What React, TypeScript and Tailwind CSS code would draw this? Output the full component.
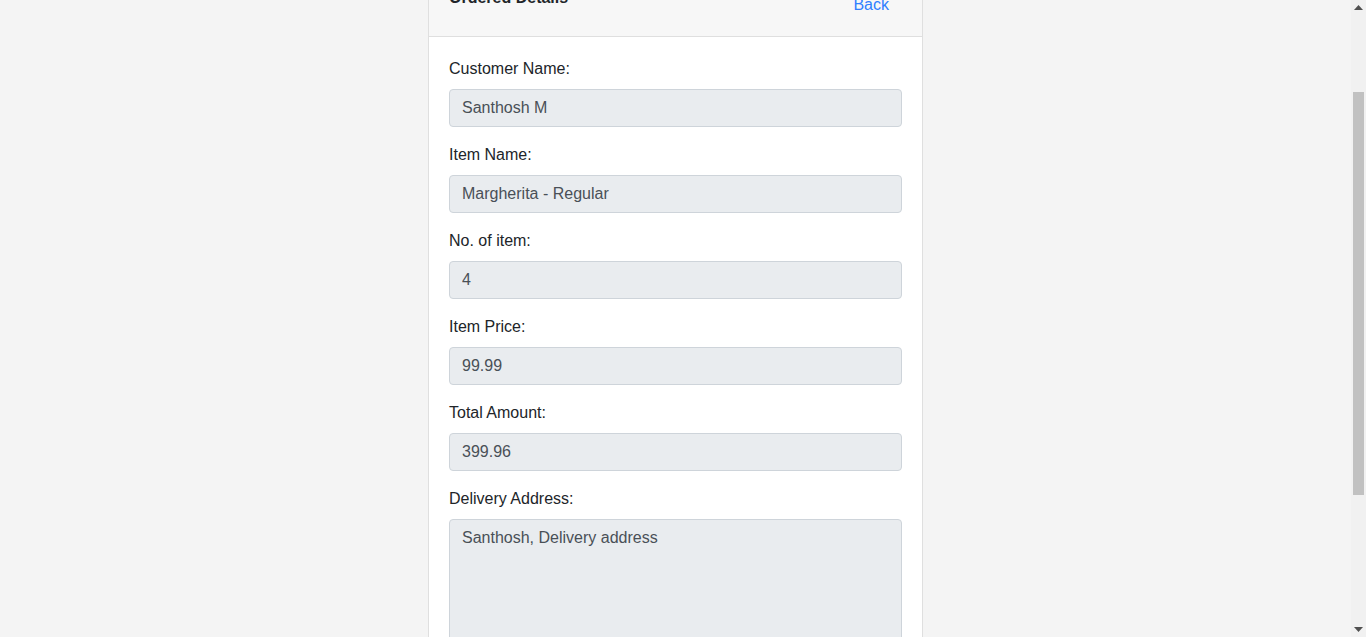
import React from "react";

const fields: { label: string; value: string }[] = [
  { label: "Customer Name:", value: "Santhosh M" },
  { label: "Item Name:", value: "Margherita - Regular" },
  { label: "No. of item:", value: "4" },
  { label: "Item Price:", value: "99.99" },
  { label: "Total Amount:", value: "399.96" },
];

export default function App() {
  return (
    <div
      className="flex h-[637px] w-full overflow-hidden bg-[#f4f4f4] text-[#212529]"
      style={{ fontFamily: '"Liberation Sans", Arial, sans-serif' }}
    >
      <div className="flex-1 min-w-0">
        <div className="mx-auto -mt-[27px] w-[495px] rounded border border-[#dfdfdf] bg-white">
          <div className="flex items-start justify-between border-b border-[#dfdfdf] bg-[#f7f7f7] px-5 py-3">
            <div className="text-[16px] font-bold leading-6">Ordered Details</div>
            <button className="border border-transparent px-3 py-1.5 text-[16px] leading-6 text-[#2f80ff]">
              Back
            </button>
          </div>
          <div className="p-5">
            {fields.map((f) => (
              <div key={f.label} className="mb-4">
                <label className="mb-2 block text-[16px] leading-6">{f.label}</label>
                <input
                  disabled
                  value={f.value}
                  readOnly
                  className="block h-[38px] w-full rounded border border-[#ced4da] bg-[#e9ecef] px-3 py-1.5 text-[16px] leading-6 text-[#495057]"
                  style={{ fontFamily: '"Liberation Sans", Arial, sans-serif' }}
                />
              </div>
            ))}
            <div className="mb-4">
              <label className="mb-2 block text-[16px] leading-6">Delivery Address:</label>
              <textarea
                disabled
                readOnly
                rows={6}
                value="Santhosh, Delivery address"
                className="block w-full resize-none rounded border border-[#ced4da] bg-[#e9ecef] px-3 py-1.5 text-[16px] leading-6 text-[#495057]"
                style={{ fontFamily: '"Liberation Sans", Arial, sans-serif' }}
              />
            </div>
          </div>
        </div>
      </div>
      <div className="flex w-[15px] shrink-0 flex-col bg-[#f1f1f1]">
        <div className="flex h-[15px] items-center justify-center">
          <svg width="9" height="5" viewBox="0 0 9 5">
            <polygon points="4.5,0 9,5 0,5" fill="#505050" />
          </svg>
        </div>
        <div className="flex-1 px-[2px] pt-[77px]">
          <div className="h-[403px] w-full bg-[#c1c1c1]" />
        </div>
        <div className="flex h-[15px] items-center justify-center">
          <svg width="9" height="5" viewBox="0 0 9 5">
            <polygon points="0,0 9,0 4.5,5" fill="#505050" />
          </svg>
        </div>
      </div>
    </div>
  );
}
